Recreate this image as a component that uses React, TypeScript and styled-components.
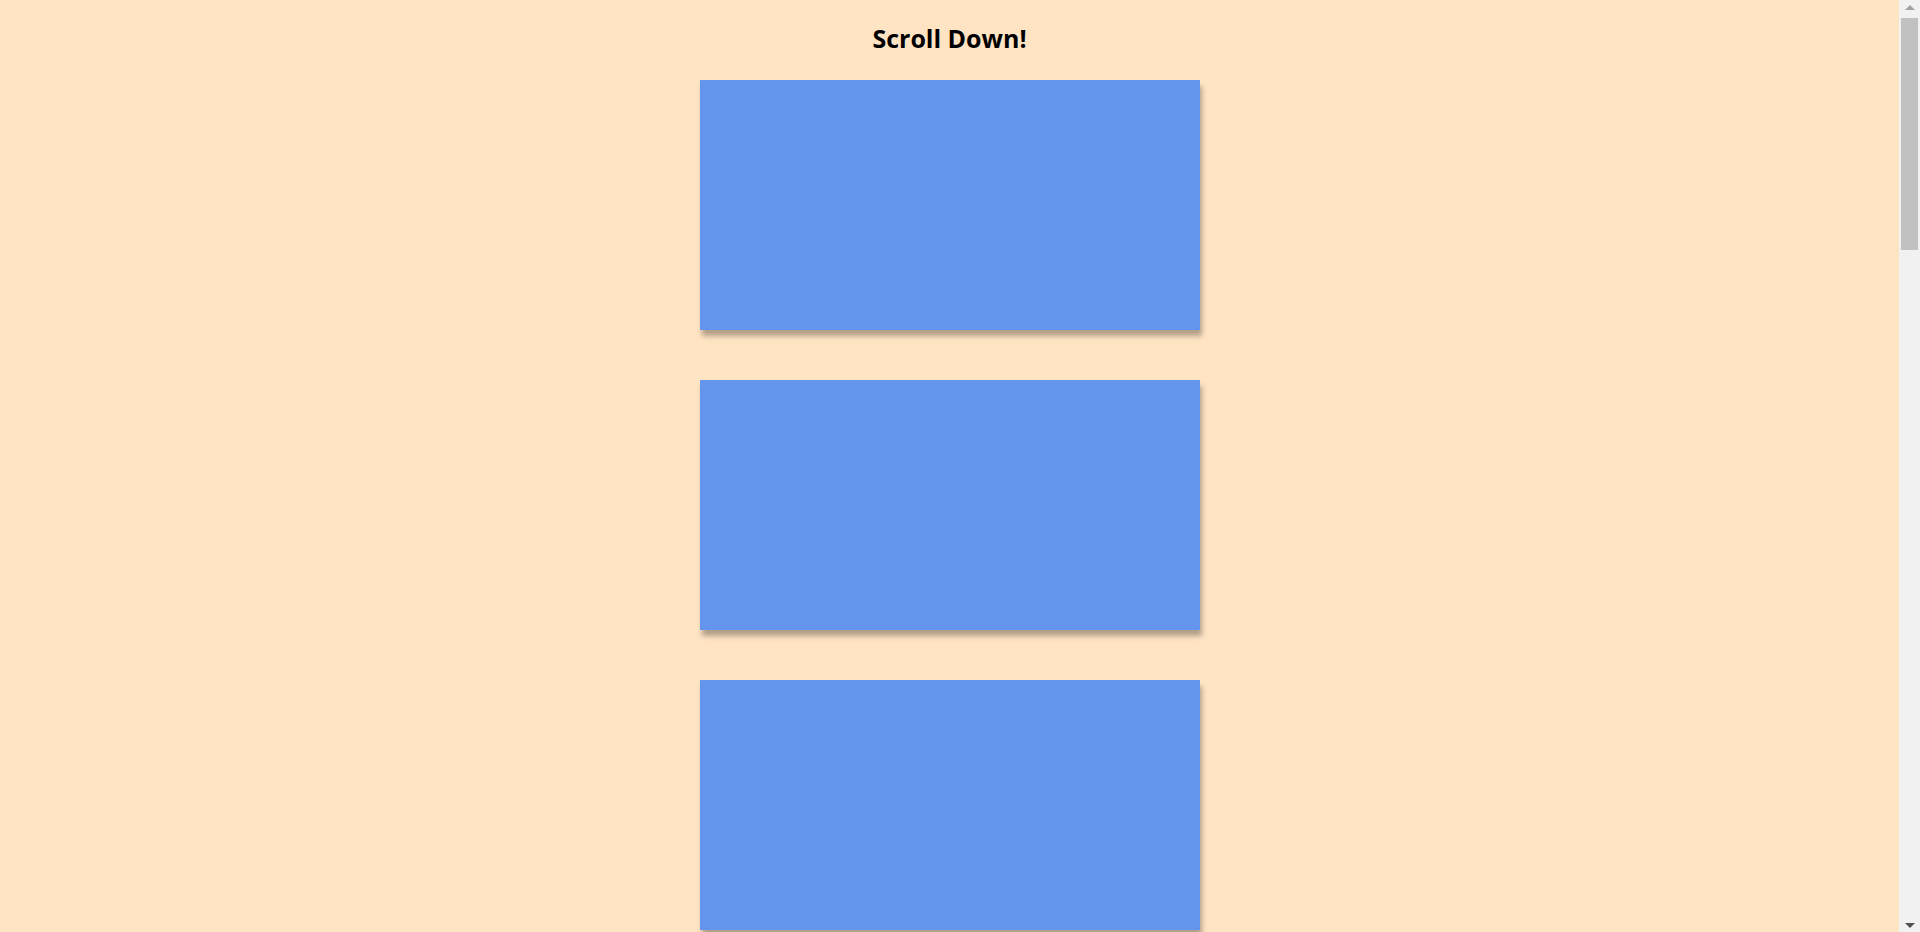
import React from 'react';
import styled, { createGlobalStyle } from 'styled-components';

const GlobalStyle = createGlobalStyle`
  * {
    box-sizing: border-box;
  }
  body {
    margin: 0;
    background-color: bisque;
    font-family: 'Segoe UI', 'Open Sans', 'Noto Sans', sans-serif;
  }
`;

// the page leaves room on the right for the scrollbar gutter
const Page = styled.div`
  display: flex;
  flex-direction: column;
  align-items: center;
  padding: 0 21px 25px 0;
`;

const Title = styled.h1`
  margin: 21px 0 0;
  font-size: 25px;
  line-height: 34px;
  font-weight: 700;
  color: #000;
`;

const Box = styled.div`
  width: 500px;
  height: 250px;
  margin: 25px 0;
  background-color: cornflowerblue;
  box-shadow: 2px 6px 5px rgba(0, 0, 0, 0.3);
`;

// drawn scrollbar, sits over the right edge of the window
const Scrollbar = styled.div`
  position: fixed;
  top: 0;
  right: 0;
  bottom: 0;
  width: 21px;
  display: flex;
  flex-direction: column;
  align-items: center;
  background-color: #f1f1f1;
`;

const Arrow = styled.div<{ $down?: boolean }>`
  height: 18px;
  flex: none;
  display: flex;
  align-items: ${(p) => (p.$down ? 'flex-end' : 'flex-start')};
  padding: ${(p) => (p.$down ? '0 0 4px' : '5px 0 0')};
  margin-top: ${(p) => (p.$down ? 'auto' : '0')};
  &::before {
    content: '';
    display: block;
    border-left: 5px solid transparent;
    border-right: 5px solid transparent;
    ${(p) =>
      p.$down
        ? 'border-top: 5px solid #505050;'
        : 'border-bottom: 5px solid #a3a3a3;'}
  }
`;

const Thumb = styled.div`
  width: 17px;
  height: 232px;
  flex: none;
  background-color: #c1c1c1;
`;

const boxes = Array.from({ length: 12 }, (_, i) => i);

const App: React.FC = () => {
  return (
    <>
      <GlobalStyle />
      <Page>
        <Title>Scroll Down!</Title>
        {boxes.map((b) => (
          <Box key={b} />
        ))}
      </Page>
      <Scrollbar>
        <Arrow />
        <Thumb />
        <Arrow $down />
      </Scrollbar>
    </>
  );
};

export default App;
